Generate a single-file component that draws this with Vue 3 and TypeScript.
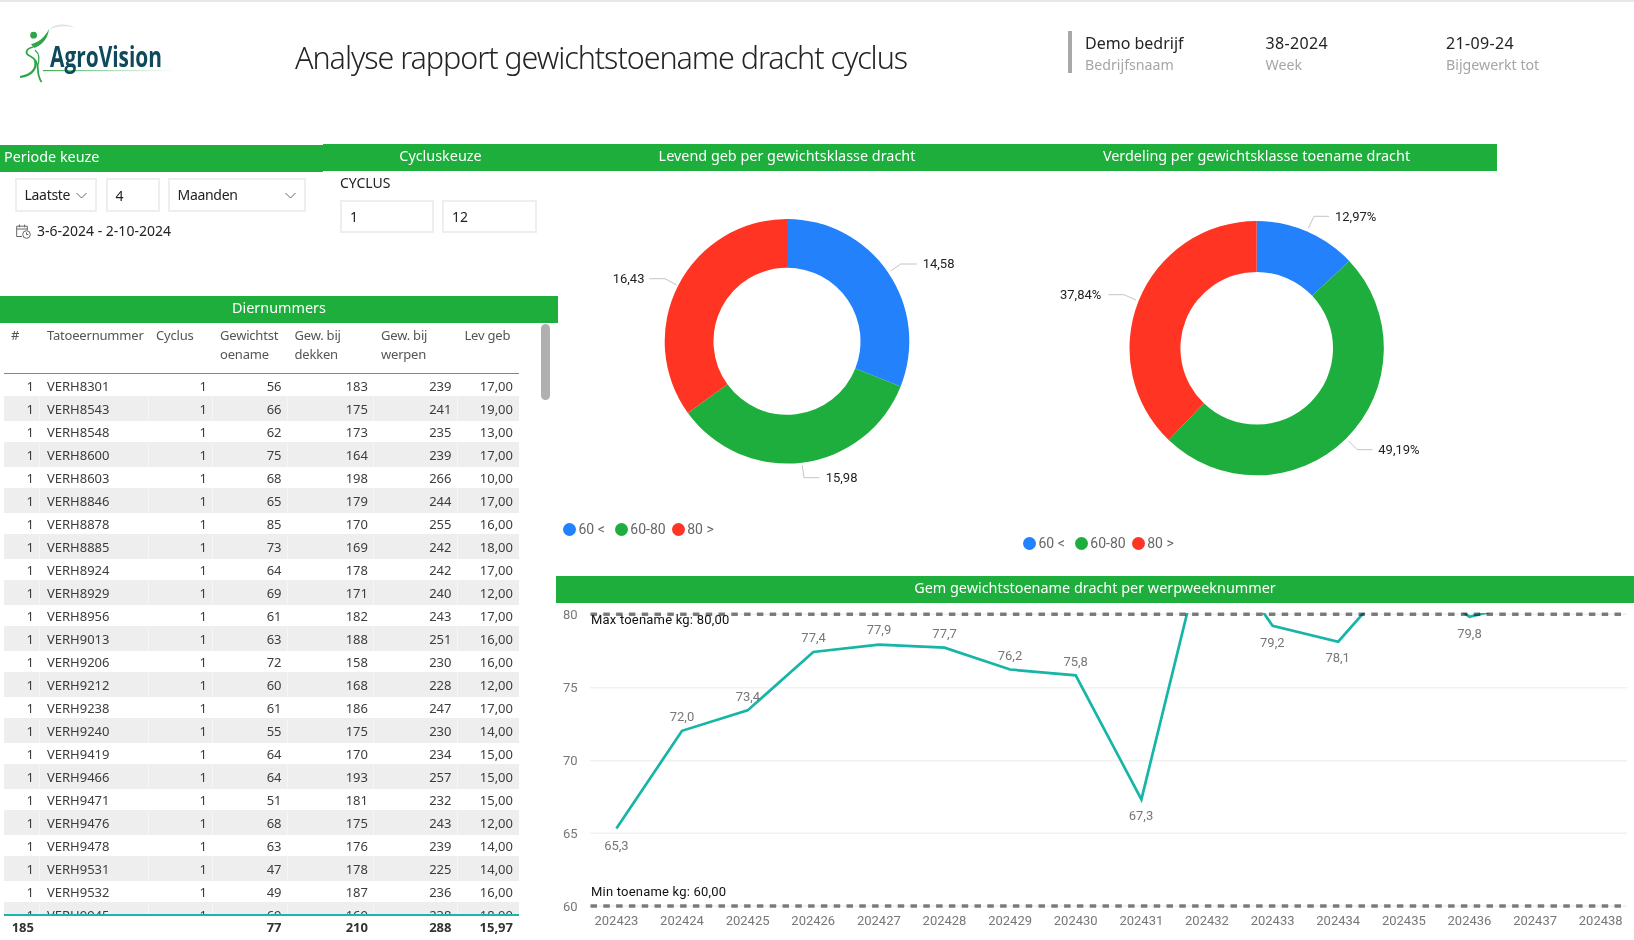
<script setup lang="ts">
interface Seg { color: string; value: number }
const arc = (cx: number, cy: number, r0: number, r1: number, a0: number, a1: number): string => {
  const pt = (r: number, a: number) => {
    const t = (a * Math.PI) / 180
    return `${(cx + r * Math.sin(t)).toFixed(2)} ${(cy - r * Math.cos(t)).toFixed(2)}`
  }
  const large = a1 - a0 > 180 ? 1 : 0
  return `M${pt(r1, a0)}A${r1} ${r1} 0 ${large} 1 ${pt(r1, a1)}L${pt(r0, a1)}A${r0} ${r0} 0 ${large} 0 ${pt(r0, a0)}Z`
}
const donut = (segs: Seg[], cx: number, cy: number, r0: number, r1: number) => {
  const total = segs.reduce((s, x) => s + x.value, 0)
  let a = 0
  return segs.map((s) => {
    const start = a
    a += (s.value / total) * 360
    return { color: s.color, d: arc(cx, cy, r0, r1, start, a) }
  })
}
const BLUE = '#2381fb', GREEN = '#1eae3e', RED = '#ff3423'
const donutA = donut([{ color: BLUE, value: 14.58 }, { color: GREEN, value: 15.98 }, { color: RED, value: 16.43 }], 787, 341.3, 73.5, 122.3)
const donutB = donut([{ color: BLUE, value: 12.97 }, { color: GREEN, value: 49.19 }, { color: RED, value: 37.84 }], 1256.7, 348.2, 76.3, 127.2)
const legend = [{ c: BLUE, t: '60 <' }, { c: GREEN, t: '60-80' }, { c: RED, t: '80 >' }]
const leadersA = [
  { p: '890.7,271 900.7,264 916.7,264', x: 922.7, y: 263.5, t: '14,58' },
  { p: '649.3,278.7 665,278.7 676.7,285', x: 612.7, y: 278.5, t: '16,43' },
  { p: '802.3,465.3 804,477.7 819.3,477.7', x: 825.7, y: 477.5, t: '15,98' }
]
const leadersB = [
  { p: '1308.3,228.3 1314,216.3 1329,216.3', x: 1335, y: 216.5, t: '12,97%' },
  { p: '1108.3,294.7 1124,294.7 1136,300', x: 1060, y: 294.7, t: '37,84%' },
  { p: '1348.3,440.7 1357.3,449.7 1372.7,449.7', x: 1378.3, y: 449.7, t: '49,19%' }
]
const columns = ['#', 'Tatoeernummer', 'Cyclus', 'Gewichtst\noename', 'Gew. bij\ndekken', 'Gew. bij\nwerpen', 'Lev geb']
const raw = `8301 56 183 239 17,00|8543 66 175 241 19,00|8548 62 173 235 13,00|8600 75 164 239 17,00|8603 68 198 266 10,00|8846 65 179 244 17,00|8878 85 170 255 16,00|8885 73 169 242 18,00|8924 64 178 242 17,00|8929 69 171 240 12,00|8956 61 182 243 17,00|9013 63 188 251 16,00|9206 72 158 230 16,00|9212 60 168 228 12,00|9238 61 186 247 17,00|9240 55 175 230 14,00|9419 64 170 234 15,00|9466 64 193 257 15,00|9471 51 181 232 15,00|9476 68 175 243 12,00|9478 63 176 239 14,00|9531 47 178 225 14,00|9532 49 187 236 16,00|9945 69 169 238 18,00`
const rows = raw.split('|').map((r) => {
  const [id, a, b, c, d] = r.split(' ')
  return ['1', 'VERH' + id, '1', a, b, c, d]
})
const total = ['185', '', '', '77', '210', '288', '15,97']

const X0 = 616.4, DX = 65.62
const yOf = (v: number) => 906 - (v - 60) * 14.6
const weeks = Array.from({ length: 16 }, (_, i) => ({ x: X0 + i * DX, t: String(202423 + i) }))
const values = [65.3, 72.0, 73.4, 77.4, 77.9, 77.7, 76.2, 75.8, 67.3, 85.6, 79.2, 78.1, 83.2, 79.8, 80.9, 81.5]
const linePts = values.map((v, i) => `${(X0 + i * DX).toFixed(1)},${yOf(v).toFixed(1)}`).join(' ')
const axis = [{ v: 80, y: 614.3 }, { v: 75, y: 687.7 }, { v: 70, y: 760.7 }, { v: 65, y: 833.3 }, { v: 60, y: 906 }]
const labels = [
  { x: 616.4, y: 845.3, t: '65,3' }, { x: 682, y: 716.3, t: '72,0' }, { x: 747.9, y: 696.7, t: '73,4' },
  { x: 813.6, y: 637.7, t: '77,4' }, { x: 879, y: 629.3, t: '77,9' }, { x: 944.6, y: 633, t: '77,7' },
  { x: 1010, y: 655.3, t: '76,2' }, { x: 1075.7, y: 661.3, t: '75,8' }, { x: 1141, y: 815.3, t: '67,3' },
  { x: 1272.3, y: 642.3, t: '79,2' }, { x: 1337.7, y: 657.3, t: '78,1' }, { x: 1469.5, y: 633.3, t: '79,8' }
]
</script>

<template>
  <div class="page">
    <header class="top">
      <svg class="logo" width="180" height="100" viewBox="0 2 180 100">
        <defs>
          <linearGradient id="fade" x1="0" x2="1" y1="0" y2="0">
            <stop offset="0" stop-color="#3fae55" />
            <stop offset="0.6" stop-color="#bfe3c6" />
            <stop offset="1" stop-color="#ffffff" />
          </linearGradient>
        </defs>
        <path d="M48 30C54 24 66 22 75 28C66 25 56 26 48 30Z" fill="#e2e2e2" />
        <circle cx="33.6" cy="35.2" r="3.4" fill="#2fa548" />
        <path d="M31 44C38 43 45 37 49 29C48 39 41 46 34 48Z" fill="#2fa548" />
        <path d="M33 47C25 49 25 54 30 56C36 59 38 63 38 70C38 75 39 78 41.5 82" fill="none" stroke="#2fa548" stroke-width="1.8" />
        <path d="M35 60C37 68 33 75 20 77" fill="none" stroke="#2fa548" stroke-width="2.2" />
        <path d="M35 50C40 54 40 60 37 68" fill="none" stroke="#2fa548" stroke-width="1.2" />
        <rect x="43" y="70" width="134" height="1.2" fill="url(#fade)" />
        <text class="logo-text" x="50" y="67" textLength="112" lengthAdjust="spacingAndGlyphs">AgroVision</text>
      </svg>
      <h1 class="title">Analyse rapport gewichtstoename dracht cyclus</h1>
      <div class="info">
        <div><div class="value">Demo bedrijf</div><div class="label">Bedrijfsnaam</div></div>
        <div><div class="value digits">38-2024</div><div class="label">Week</div></div>
        <div><div class="value digits">21-09-24</div><div class="label">Bijgewerkt tot</div></div>
      </div>
    </header>

    <div class="bands">
      <div class="band band-left">Periode keuze</div>
      <div class="band band-rest">
        <span>Cycluskeuze</span>
        <span>Levend geb per gewichtsklasse dracht</span>
        <span>Verdeling per gewichtsklasse toename dracht</span>
      </div>
    </div>

    <main class="main">
      <section class="left">
        <div class="slicers">
          <div class="period">
            <div class="boxes period-boxes">
              <div class="box w82"><span class="box-text">Laatste</span>
                <svg class="chev" width="11" height="7" viewBox="0 0 11 7"><path d="M.5 1l5 5 5-5" /></svg>
              </div>
              <div class="box w54">4</div>
              <div class="box w138"><span class="box-text">Maanden</span>
                <svg class="chev" width="11" height="7" viewBox="0 0 11 7"><path d="M.5 1l5 5 5-5" /></svg>
              </div>
            </div>
            <div class="date">
              <svg width="15" height="15" viewBox="0 0 15 15" class="cal">
                <path d="M6 12.5H.7V2.2h10.6V6M.7 5h10.6M3.5.6v2.6M8.5.6v2.6" />
                <circle cx="10.5" cy="10.5" r="3.8" />
                <path d="M10.5 8.4v2.2h1.8" />
              </svg>
              3-6-2024 - 2-10-2024
            </div>
          </div>
          <div class="cycle">
            <div class="cycle-label">CYCLUS</div>
            <div class="boxes cycle-boxes">
              <div class="box w94">1</div>
              <div class="box w95">12</div>
            </div>
          </div>
        </div>

        <div class="band band-table">Diernummers</div>
        <div class="table-wrap">
          <div class="table">
            <div class="row head">
              <div v-for="c in columns" :key="c" class="cell">{{ c }}</div>
            </div>
            <div class="body">
              <div v-for="(r, i) in rows" :key="r[1]" class="row line" :class="{ alt: i % 2 === 1 }">
                <div v-for="(c, j) in r" :key="j" class="cell" :class="{ num: j !== 1 }">{{ c }}</div>
              </div>
            </div>
            <div class="row foot">
              <div v-for="(c, j) in total" :key="j" class="cell num">{{ c }}</div>
            </div>
          </div>
          <div class="scrollbar"></div>
        </div>
      </section>

      <section class="right">
        <div class="donuts">
          <div class="donut-panel">
            <svg width="460" height="344" viewBox="556 172 460 344">
              <path v-for="s in donutA" :key="s.color" :d="s.d" :fill="s.color" />
              <g v-for="l in leadersA" :key="l.t">
                <polyline :points="l.p" class="leader" />
                <text :x="l.x" :y="l.y" class="dl">{{ l.t }}</text>
              </g>
            </svg>
            <div class="legend">
              <span v-for="l in legend" :key="l.t" class="lg"><i :style="{ background: l.c }"></i>{{ l.t }}</span>
            </div>
          </div>
          <div class="donut-panel">
            <svg width="618" height="358" viewBox="1016 172 618 358">
              <path v-for="s in donutB" :key="s.color" :d="s.d" :fill="s.color" />
              <g v-for="l in leadersB" :key="l.t">
                <polyline :points="l.p" class="leader" />
                <text :x="l.x" :y="l.y" class="dl">{{ l.t }}</text>
              </g>
            </svg>
            <div class="legend">
              <span v-for="l in legend" :key="l.t" class="lg"><i :style="{ background: l.c }"></i>{{ l.t }}</span>
            </div>
          </div>
        </div>

        <div class="band band-line">Gem gewichtstoename dracht per werpweeknummer</div>
        <svg class="line-chart" width="1078" height="337" viewBox="556 603 1078 337">
          <defs>
            <clipPath id="plot"><rect x="556" y="613" width="1078" height="300" /></clipPath>
          </defs>
          <line v-for="a in axis" :key="a.v" x1="590" x2="1627" :y1="a.y" :y2="a.y" class="grid" />
          <text v-for="a in axis" :key="'t' + a.v" x="563" :y="a.y" class="ax">{{ a.v }}</text>
          <text v-for="w in weeks" :key="w.t" :x="w.x" y="920" class="ax mid">{{ w.t }}</text>
          <polyline :points="linePts" class="trend" clip-path="url(#plot)" />
          <line x1="590.5" x2="1621" y1="614.3" y2="614.3" class="dash" />
          <line x1="590.5" x2="1621" y1="906" y2="906" class="dash" />
          <text v-for="l in labels" :key="l.t" :x="l.x" :y="l.y" class="ax mid">{{ l.t }}</text>
          <text x="591" y="619.5" class="ref">Max toename kg: 80,00</text>
          <text x="591" y="891.5" class="ref">Min toename kg: 60,00</text>
        </svg>
      </section>
    </main>
  </div>
</template>

<style scoped>
.page {
  width: 1634px;
  height: 940px;
  overflow: hidden;
  background: #fff;
  border-top: 2px solid #e8e8e8;
  box-sizing: border-box;
  font-family: "Noto Sans", "Open Sans", sans-serif;
  color: #252423;
}
.top { display: flex; height: 142px; }
.logo { flex: none; }
.logo-text { font-family: "Open Sans", sans-serif; font-size: 28px; font-weight: 700; fill: #0e4a5c; }
.title {
  margin: 35px 0 0 115px;
  width: 773px;
  flex: none;
  font-size: 30.5px;
  line-height: 40px;
  font-weight: 300;
  letter-spacing: -1.05px;
  white-space: nowrap;
}
.info {
  display: grid;
  grid-template-columns: 180.5px 180.5px 180px;
  height: 42px;
  margin-top: 29px;
  padding-left: 13px;
  border-left: 4px solid #a8a8a8;
}
.value { font-size: 16px; line-height: 24px; color: #252423; }
.digits { letter-spacing: 0.35px; }
.label { font-size: 14.2px; line-height: 20px; color: #a6a6a6; }
.bands { display: flex; align-items: flex-start; height: 28px; }
.band { background: #1dae3c; color: #fff; font-size: 14.4px; height: 27px; line-height: 24px; white-space: nowrap; }
.band-left { width: 323px; margin-top: 1px; padding-left: 4px; box-sizing: border-box; }
.band-rest { display: grid; grid-template-columns: 235px 458px 481px; width: 1174px; text-align: center; }
.main { display: grid; grid-template-columns: 556px 1078px; }
.left { min-width: 0; }
.slicers { display: flex; height: 124px; font-size: 14px; color: #222; }
.period { width: 323px; padding: 6px 0 0 14.5px; box-sizing: border-box; }
.boxes { display: flex; gap: 8px; }
.period-boxes .w82 { margin-right: 1px; }
.box {
  display: flex;
  align-items: center;
  justify-content: space-between;
  height: 34px;
  padding: 0 8px;
  border: 2px solid #eeeeee;
  box-sizing: border-box;
}
.box-text { letter-spacing: -0.3px; margin-top: -2px; }
.w82 { width: 82px; }
.w54 { width: 54px; }
.w138 { width: 138px; }
.w94 { width: 94px; height: 33px; }
.w95 { width: 95px; height: 33px; }
.chev { fill: none; stroke: #666; stroke-width: 1; }
.date { display: flex; align-items: center; gap: 6px; margin: 10px 0 0 1.5px; line-height: 18px; }
.cal { fill: none; stroke: #666; stroke-width: 1; }
.cycle { padding: 1px 0 0 17px; }
.cycle-label { line-height: 20px; }
.cycle-boxes { margin-top: 7px; }
.band-table { width: 558px; text-align: center; }
.table-wrap { display: flex; padding-left: 4px; font-size: 13px; }
.table { width: 515px; flex: none; }
.row { display: grid; grid-template-columns: 36px 109px 64px 74.5px 86.5px 83.5px 61.5px; }
.cell { padding: 0 6px 0 7px; white-space: pre-line; }
.num { text-align: right; }
.head { height: 50px; padding-top: 3px; box-sizing: border-box; line-height: 19px; color: #555; letter-spacing: -0.2px; box-shadow: 0 1px 0 #1cb5a9; }
.body { height: 540px; margin-top: 1px; overflow: hidden; }
.line { height: 23px; line-height: 24px; color: #3c3c3c; }
.alt { background: #eeeeee; box-shadow: 0 1px 0 #eeeeee, 0 -1px 0 #eeeeee; }
.alt .cell + .cell { box-shadow: -1px 0 0 rgba(255, 255, 255, 0.45); }
.foot { height: 24px; border-top: 2px solid #1cb5a9; box-sizing: border-box; line-height: 22px; font-weight: 700; color: #333; }
.scrollbar { width: 9px; height: 76px; margin: 1px 0 0 22px; border-radius: 5px; background: #b0b0b0; }
.right { min-width: 0; }
.donuts { display: grid; grid-template-columns: 460px 618px; height: 404px; }
.donut-panel svg { display: block; }
.legend { display: flex; gap: 6px; margin-top: 4px; padding-left: 7px; font-family: Roboto, sans-serif; font-size: 14px; line-height: 18px; color: #666; }
.lg { display: flex; align-items: center; gap: 2.5px; }
.lg:first-child { margin-right: 4px; }
.lg i { display: block; width: 13px; height: 13px; border-radius: 50%; }
.leader { fill: none; stroke: #c4c4c4; stroke-width: 1; }
.dl { font-family: Roboto, sans-serif; font-size: 13px; fill: #222; dominant-baseline: central; }
.band-line { text-align: center; }
.line-chart { display: block; }
.grid { stroke: #f1f1f1; stroke-width: 1.5; }
.ax { font-family: Roboto, sans-serif; font-size: 13px; fill: #777; dominant-baseline: central; }
.mid { text-anchor: middle; }
.trend { fill: none; stroke: #17b5a7; stroke-width: 2.7; stroke-linejoin: miter; }
.dash { stroke: #7f7f7f; stroke-width: 3.5; stroke-dasharray: 6.5 6.3; mix-blend-mode: multiply; }
.ref { font-family: Roboto, sans-serif; font-size: 13px; fill: #111; dominant-baseline: central; letter-spacing: 0.2px; }
</style>

<style>
html, body { background: #fff; }
</style>
